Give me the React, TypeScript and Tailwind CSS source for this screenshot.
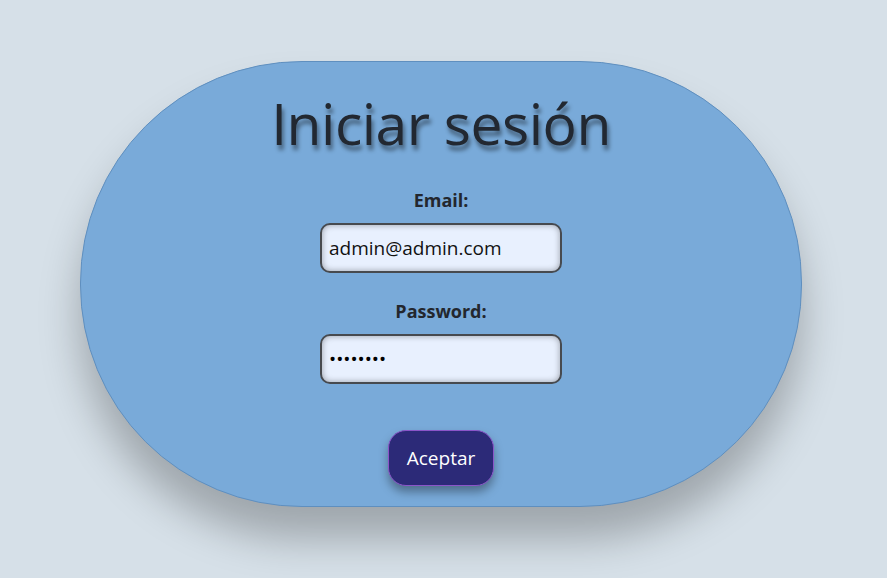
import { useState } from "react";

export default function App() {
    const [email, setEmail] = useState("admin@admin.com");
    const [password, setPassword] = useState("admin123");

    return (
        <main
            className="w-[887px] h-[578px] bg-[#d6e0e8] flex pl-[80px] pt-[61px]"
            style={{ fontFamily: '"Open Sans", "Noto Sans", sans-serif' }}
        >
            <form
                onSubmit={(e) => e.preventDefault()}
                className="w-[722px] h-[446px] bg-[#79aad9] border border-[#5f8fbf] rounded-[222px] flex flex-col items-center shadow-[0_32px_40px_rgba(0,0,0,0.26)]"
            >
                <h1 className="mt-[22px] text-[57px] leading-[78px] text-[#222831] tracking-[-0.5px] [text-shadow:2px_5px_4px_rgba(0,0,0,0.45)]">
                    Iniciar sesión
                </h1>

                <label className="mt-[26px] text-[18px] font-bold text-[#23272e] leading-6">Email:</label>
                <input
                    type="email"
                    value={email}
                    onChange={(e) => setEmail(e.target.value)}
                    className="mt-[11px] w-[242px] h-[50px] px-[7px] rounded-[10px] border-2 border-[#474a4f] bg-[#e8f0fe] text-[19px] text-[#111] outline-none shadow-[inset_0_0_6px_rgba(0,0,0,0.35)]"
                />

                <label className="mt-[26px] text-[18px] font-bold text-[#23272e] leading-6">Password:</label>
                <input
                    type="password"
                    value={password}
                    onChange={(e) => setPassword(e.target.value)}
                    className="mt-[11px] w-[242px] h-[50px] px-[7px] rounded-[10px] border-2 border-[#474a4f] bg-[#e8f0fe] text-[19px] text-black outline-none shadow-[inset_0_0_6px_rgba(0,0,0,0.35)]"
                />

                <button
                    type="submit"
                    className="mt-[46px] w-[106px] h-[56px] rounded-[18px] border border-[#8b55c9] bg-[#2c2a78] text-white text-[19px] shadow-[0_6px_10px_rgba(0,0,0,0.35)]"
                >
                    Aceptar
                </button>
            </form>
        </main>
    );
}
